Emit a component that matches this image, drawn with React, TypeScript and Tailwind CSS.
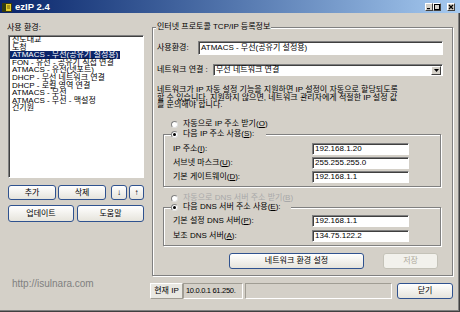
import type { ReactElement, ReactNode } from "react";

const envList = [
  "진도대교",
  "도청",
  "ATMACS - 무선(공유기 설정용)",
  "FON - 유선 - 공유기 직접 연결",
  "ATMACS - 유선(넷포트)",
  "DHCP - 무선 네트워크 연결",
  "DHCP - 로컬 영역 연결",
  "ATMACS - 무선",
  "ATMACS - 무선 - 맥설정",
  "건기원",
];

function Btn({
  className,
  children,
  disabled = false,
}: {
  className: string;
  children: ReactNode;
  disabled?: boolean;
}): ReactElement {
  const look = disabled
    ? "border-[#c4c2b8] bg-[#f2f1ec] text-[#aca899]"
    : "border-[#2f528f] bg-gradient-to-b from-white to-[#e6e4dc] text-black";
  return (
    <div
      className={`flex shrink-0 items-center justify-center rounded-[3px] border text-[8px] leading-none ${look} ${className}`}
    >
      {children}
    </div>
  );
}

function Field({ className, children }: { className: string; children?: ReactNode }): ReactElement {
  return (
    <div
      className={`flex shrink-0 items-center overflow-hidden whitespace-nowrap border border-[#808080] border-r-white border-b-white bg-white pl-[2px] text-[8px] leading-none shadow-[inset_1px_1px_0_#404040] ${className}`}
    >
      {children}
    </div>
  );
}

function Radio({ checked = false }: { checked?: boolean }): ReactElement {
  return (
    <span className="flex h-[7px] w-[7px] shrink-0 items-center justify-center rounded-full border border-[#808080] border-r-[#e0e0e0] border-b-[#e0e0e0] bg-white">
      {checked && <span className="h-[3px] w-[3px] rounded-full bg-black" />}
    </span>
  );
}

function CaptionButton({ kind }: { kind: "min" | "max" | "close" }): ReactElement {
  return (
    <div className="flex h-[8px] w-[8px] items-center justify-center border border-white border-r-[#404040] border-b-[#404040] bg-[#d4d0c8]">
      <svg width="6" height="6" viewBox="0 0 6 6">
        {kind === "min" && <rect x="1" y="4" width="3" height="1.2" fill="#000" />}
        {kind === "max" && (
          <rect x="0.5" y="0.5" width="5" height="5" fill="none" stroke="#000" strokeWidth="1" />
        )}
        {kind === "close" && (
          <path d="M1 1 L5 5 M5 1 L1 5" stroke="#000" strokeWidth="1.3" />
        )}
      </svg>
    </div>
  );
}

export default function App(): ReactElement {
  return (
    <div className="flex h-[312px] w-[460px] flex-col overflow-hidden bg-[#d4d0c8] font-['Liberation_Sans','Noto_Sans_CJK_KR',sans-serif] text-black shadow-[inset_-1px_-1px_0_#404040,inset_-2px_-2px_0_#808080]">
      {/* Title bar */}
      <div className="flex h-[13px] shrink-0 items-center bg-gradient-to-r from-[#0a246a] to-[#a6caf0] pl-[2px] pr-[5px]">
        <svg width="10" height="10" viewBox="0 0 10 10">
          <rect x="0.5" y="1.5" width="9" height="8" fill="#e6cf2a" stroke="#3a3a10" />
          <rect x="1" y="2" width="3" height="7" fill="#2f3d12" />
          <path d="M5 4 L8 4 M5 6 L8 6" stroke="#6b5a10" strokeWidth="1" />
        </svg>
        <span className="ml-[3px] text-[9.5px] font-bold leading-none text-white">ezIP 2.4</span>
        <div className="ml-auto flex items-center">
          <CaptionButton kind="min" />
          <CaptionButton kind="max" />
          <div className="ml-[6px]">
            <CaptionButton kind="close" />
          </div>
        </div>
      </div>

      <div className="flex flex-1">
        {/* Left pane */}
        <div className="flex w-[150px] shrink-0 flex-col pl-[8px]">
          <div className="ml-[-1px] mt-[10px] h-[10px] text-[8px] leading-[10px]">사용 환경:</div>
          <div className="mt-[2px] h-[143px] w-[136px] overflow-hidden border border-[#808080] border-r-white border-b-white bg-white pl-[1px] text-[8px] shadow-[inset_1px_1px_0_#404040]">
            {envList.map((item, idx) => (
              <div
                key={idx}
                className={`h-[7.6px] w-fit whitespace-nowrap px-[2px] leading-[7.6px] ${
                  idx === 2 ? "bg-[#0a246a] text-white" : ""
                }`}
              >
                {item}
              </div>
            ))}
          </div>

          <div className="mt-[7px] flex h-[15px]">
            <Btn className="w-[48px]">추가</Btn>
            <Btn className="ml-[2px] w-[48px]">삭제</Btn>
            <Btn className="ml-[5px] w-[16px]">↓</Btn>
            <Btn className="ml-[2px] w-[15px]">↑</Btn>
          </div>
          <div className="mt-[5px] flex h-[17px]">
            <Btn className="w-[66px]">업데이트</Btn>
            <Btn className="ml-[3px] w-[67px]">도움말</Btn>
          </div>

          <div className="ml-[4px] mt-[57px] text-[10px] leading-[10px] text-[#808080]">http://isulnara.com</div>
        </div>

        {/* Right pane */}
        <div className="flex flex-col pt-[14px]">
          <div className="relative ml-[2px] flex h-[249px] w-[301px] flex-col border border-[#808080] pl-[4px] text-[8px] shadow-[inset_1px_1px_0_#fff,1px_1px_0_#fff]">
            <span className="absolute left-[3px] top-[-6px] h-[10px] bg-[#d4d0c8] px-[1px] leading-[10px]">
              인터넷 프로토콜 TCP/IP 등록정보
            </span>

            <div className="mt-[13px] flex h-[14px] items-center">
              <span className="w-[41px] shrink-0">사용환경:</span>
              <Field className="h-[14px] w-[245px]">ATMACS - 무선(공유기 설정용)</Field>
            </div>

            <div className="mt-[9px] flex h-[12px] items-center">
              <span className="w-[56px] shrink-0">네트워크 연결 :</span>
              <Field className="h-[12px] w-[230px] justify-between pr-[1px]">
                <span>무선 네트워크 연결</span>
                <span className="flex h-[9px] w-[10px] items-center justify-center border border-white border-r-[#404040] border-b-[#404040] bg-[#d4d0c8]">
                  <svg width="5" height="3" viewBox="0 0 5 3">
                    <path d="M0 0 L5 0 L2.5 3 Z" fill="#000" />
                  </svg>
                </span>
              </Field>
            </div>

            <p className="mt-[10px] whitespace-nowrap leading-[7.7px]">
              네트워크가 IP 자동 설정 기능을 지원하면 IP 설정이 자동으로 할당되도록
              <br />할 수 있습니다. 지원하지 않으면, 네트워크 관리자에게 적절한 IP 설정 값
              <br />를 문의해야 합니다.
            </p>

            <div className="mt-[10px] flex h-[10px] items-center gap-[5px] pl-[14px]">
              <Radio />
              <span className="leading-none">
                자동으로 IP 주소 받기(<u>O</u>)
              </span>
            </div>

            {/* static IP group */}
            <div className="relative ml-[6px] mt-[5px] flex h-[53px] w-[278px] flex-col border border-[#808080] pt-[7px] shadow-[inset_1px_1px_0_#fff,1px_1px_0_#fff]">
              <span className="absolute left-[7px] top-[-6px] flex h-[10px] items-center gap-[5px] bg-[#d4d0c8] pr-[12px]">
                <Radio checked />
                <span className="leading-none">
                  다음 IP 주소 사용(<u>S</u>):
                </span>
              </span>
              {[
                ["IP 주소(", "I", "):", "192.168.1.20"],
                ["서브넷 마스크(", "U", "):", "255.255.255.0"],
                ["기본 게이트웨이(", "D", "):", "192.168.1.1"],
              ].map(([a, key, b, value]) => (
                <div key={value + a} className="flex h-[14px] items-center pl-[9px]">
                  <span className="w-[139px] shrink-0 leading-none">
                    {a}
                    <u>{key}</u>
                    {b}
                  </span>
                  <Field className="h-[12px] w-[97px]">{value}</Field>
                </div>
              ))}
            </div>

            <div className="mt-[6px] flex h-[10px] items-center gap-[5px] pl-[14px]">
              <Radio />
              <span className="leading-none text-[#a8a8a8]">
                자동으로 DNS 서버 주소 받기(<u>B</u>)
              </span>
            </div>

            {/* DNS group */}
            <div className="relative ml-[6px] mt-[4px] flex h-[39px] w-[278px] flex-col border border-[#808080] pt-[5px] shadow-[inset_1px_1px_0_#fff,1px_1px_0_#fff]">
              <span className="absolute left-[7px] top-[-6px] flex h-[10px] items-center gap-[5px] bg-[#d4d0c8] pr-[10px]">
                <Radio checked />
                <span className="leading-none">
                  다음 DNS 서버 주소 사용(<u>E</u>):
                </span>
              </span>
              {[
                ["기본 설정 DNS 서버(", "P", "):", "192.168.1.1"],
                ["보조 DNS 서버(", "A", "):", "134.75.122.2"],
              ].map(([a, key, b, value]) => (
                <div key={value + a} className="flex h-[15px] items-center pl-[9px]">
                  <span className="w-[139px] shrink-0 leading-none">
                    {a}
                    <u>{key}</u>
                    {b}
                  </span>
                  <Field className="h-[12px] w-[97px]">{value}</Field>
                </div>
              ))}
            </div>

            <div className="mt-[7px] flex h-[16px]">
              <Btn className="ml-[72px] w-[135px]">네트워크 환경 설정</Btn>
              <Btn className="ml-[19px] w-[55px]" disabled>
                저장
              </Btn>
            </div>
          </div>

          {/* Status row */}
          <div className="mt-[7px] flex h-[16px] text-[8px]">
            <div className="flex w-[33px] items-center justify-center border border-white border-r-[#a09d94] border-b-[#a09d94] bg-[#e9e8e2] leading-none">
              현재 IP
            </div>
            <div className="flex w-[60px] items-center overflow-hidden whitespace-nowrap border border-[#a09d94] border-r-white border-b-white pl-[2px] text-[7.5px] leading-none tracking-[-0.3px]">
              10.0.0.1 61.250.
            </div>
            <div className="ml-[2px] w-[147px] border border-[#a09d94] border-r-white border-b-white" />
            <Btn className="ml-[5px] w-[56px]">닫기</Btn>
          </div>
        </div>
      </div>
    </div>
  );
}
